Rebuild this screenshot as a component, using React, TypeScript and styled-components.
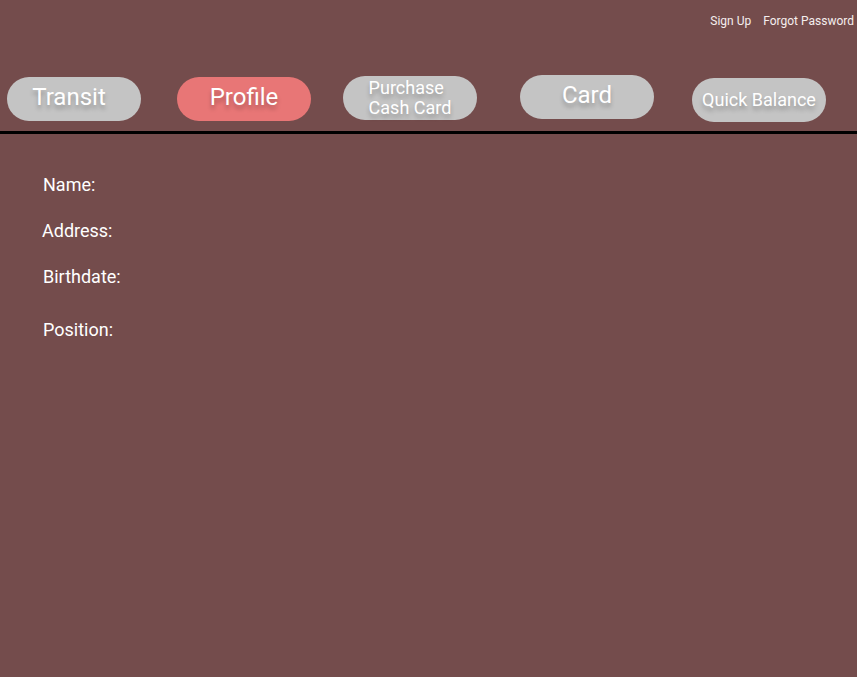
import React from "react";
import styled, { createGlobalStyle } from "styled-components";

const Global = createGlobalStyle`
  html, body {
    margin: 0;
    padding: 0;
    background: #744c4c;
    font-family: Roboto, "Liberation Sans", sans-serif;
  }
  * { box-sizing: border-box; }
`;

const Page = styled.div`
  width: 857px;
  min-height: 677px;
  background: #744c4c;
  color: #ffffff;
`;

const TopBar = styled.div`
  display: flex;
  justify-content: flex-end;
  gap: 12px;
  height: 40px;
  padding: 14px 3px 0 0;
`;

const TopLink = styled.a`
  font-size: 12px;
  line-height: 14px;
  color: #f4eeee;
  text-decoration: none;
  cursor: pointer;
`;

const Nav = styled.nav`
  display: flex;
  align-items: flex-start;
  padding-left: 7px;
  border-bottom: 3px solid #000000;
  height: 94px;
`;

const Pill = styled.button<{ $left: number; $top: number; $active?: boolean; $big?: boolean; $padRight?: number }>`
  display: flex;
  align-items: center;
  justify-content: center;
  flex: 0 0 auto;
  width: 134px;
  height: 44px;
  margin-left: ${(p) => p.$left}px;
  margin-top: ${(p) => p.$top}px;
  border: none;
  border-radius: 22px;
  background: ${(p) => (p.$active ? "#e87676" : "#c4c4c4")};
  color: #ffffff;
  font-family: Roboto, "Liberation Sans", sans-serif;
  font-size: ${(p) => (p.$big ? 24 : 18)}px;
  line-height: ${(p) => (p.$big ? "normal" : "20px")};
  padding: 0 ${(p) => p.$padRight ?? 0}px ${(p) => (p.$big ? 5 : 0)}px 0;
  text-align: left;
  text-shadow: 0 4px 4px rgba(0, 0, 0, 0.25);
  cursor: pointer;
`;

const Form = styled.div`
  display: flex;
  flex-direction: column;
  align-items: flex-start;
  padding: 40px 0 0 43px;
`;

const Label = styled.div<{ $gap: number; $dx?: number }>`
  font-size: 18px;
  line-height: 21px;
  color: #ffffff;
  margin-top: ${(p) => p.$gap}px;
  margin-left: ${(p) => p.$dx ?? 0}px;
`;

export default function App() {
  return (
    <Page>
      <Global />
      <TopBar>
        <TopLink>Sign Up</TopLink>
        <TopLink>Forgot Password</TopLink>
      </TopBar>
      <Nav>
        <Pill $left={0} $top={37} $big $padRight={10}>Transit</Pill>
        <Pill $left={36} $top={37} $big $active>Profile</Pill>
        <Pill $left={32} $top={36}>
          <span>
            Purchase
            <br />
            Cash Card
          </span>
        </Pill>
        <Pill $left={43} $top={35} $big>Card</Pill>
        <Pill $left={38} $top={38}>Quick Balance</Pill>
      </Nav>
      <Form>
        <Label $gap={0}>Name:</Label>
        <Label $gap={25} $dx={-1}>Address:</Label>
        <Label $gap={25}>Birthdate:</Label>
        <Label $gap={32}>Position:</Label>
      </Form>
    </Page>
  );
}
